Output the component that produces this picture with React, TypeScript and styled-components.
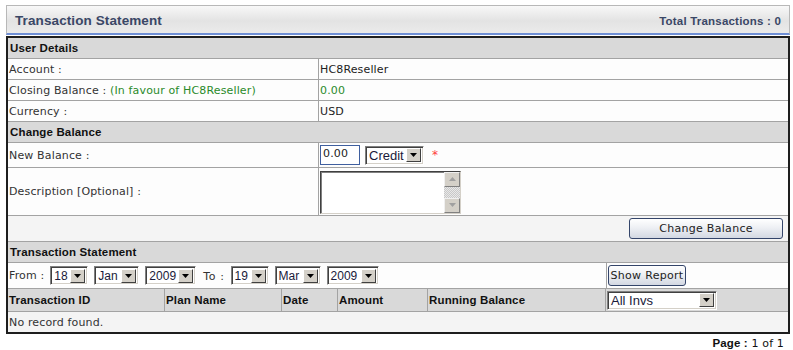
import React, { FC } from 'react';
import styled, { createGlobalStyle } from 'styled-components';

const GlobalStyle = createGlobalStyle`
  body {
    margin: 0;
    background: #ffffff;
    font-family: 'DejaVu Sans', Verdana, sans-serif;
    font-size: 11px;
    letter-spacing: 0.15px;
    color: #333333;
  }
`;

// @ fake classic controls
interface SelectProps {
  value: string;
  width: number;
  size?: number;
}

const FakeSelect: FC<SelectProps> = ({ value, width, size = 12 }) => (
  <SelectBox $w={width} $size={size}>
    <span>{value}</span>
    <ArrowButton>
      <svg width="7" height="4" viewBox="0 0 7 4">
        <path d="M0 0h7L3.5 4z" fill="#000" />
      </svg>
    </ArrowButton>
  </SelectBox>
);

const Button: FC<{ label: string; width: number }> = ({ label, width }) => <Btn $w={width}>{label}</Btn>;

const App: FC = () => {
  return (
    <>
      <GlobalStyle />
      <Page>
        <TitleBar>
          <Title>Transaction Statement</Title>
          <TotalText>Total Transactions : 0</TotalText>
        </TitleBar>

        <Panel>
          <SectionRow>User Details</SectionRow>
          <Row $h={20}>
            <Label>Account :</Label>
            <Value>HC8Reseller</Value>
          </Row>
          <Row $h={20}>
            <Label>
              Closing Balance : <Green>(In favour of HC8Reseller)</Green>
            </Label>
            <Value>
              <Green>0.00</Green>
            </Value>
          </Row>
          <Row $h={20}>
            <Label>Currency :</Label>
            <Value>USD</Value>
          </Row>

          <SectionRow>Change Balance</SectionRow>
          <Row $h={24}>
            <Label>New Balance :</Label>
            <Value>
              <AmountInput>0.00</AmountInput>
              <FakeSelect value="Credit" width={59} size={13} />
              <Required>*</Required>
            </Value>
          </Row>
          <Row $h={47}>
            <Label>Description [Optional] :</Label>
            <Value>
              <TextArea>
                <ScrollBar>
                  <ScrollBtn>
                    <svg width="7" height="4" viewBox="0 0 7 4">
                      <path d="M3.5 0L7 4H0z" fill="#a0a0a0" />
                    </svg>
                  </ScrollBtn>
                  <ScrollTrack />
                  <ScrollBtn>
                    <svg width="7" height="4" viewBox="0 0 7 4">
                      <path d="M0 0h7L3.5 4z" fill="#a0a0a0" />
                    </svg>
                  </ScrollBtn>
                </ScrollBar>
              </TextArea>
            </Value>
          </Row>
          <ActionRow>
            <Button label="Change Balance" width={154} />
          </ActionRow>

          <SectionRow>Transaction Statement</SectionRow>
          <FilterRow>
            <FilterCell>
              From :
              <FakeSelect value="18" width={38} />
              <FakeSelect value="Jan" width={45} />
              <FakeSelect value="2009" width={51} />
              <ToLabel>To :</ToLabel>
              <FakeSelect value="19" width={38} />
              <FakeSelect value="Mar" width={46} />
              <FakeSelect value="2009" width={52} />
            </FilterCell>
            <ReportCell>
              <Button label="Show Report" width={78} />
            </ReportCell>
          </FilterRow>
          <HeadGrid>
            <HeadCell>Transaction ID</HeadCell>
            <HeadCell>Plan Name</HeadCell>
            <HeadCell>Date</HeadCell>
            <HeadCell>Amount</HeadCell>
            <HeadCell>Running Balance</HeadCell>
            <HeadCell $last>
              <FakeSelect value="All Invs" width={110} size={13} />
            </HeadCell>
          </HeadGrid>
          <EmptyRow>No record found.</EmptyRow>
        </Panel>

        <Pager>
          <b>Page :</b> 1 of 1
        </Pager>
      </Page>
    </>
  );
};

// @ styles

const Page = styled.div`
  width: 784px;
  padding: 5px 0 0 6px;
`;

const TitleBar = styled.div`
  height: 27px;
  box-sizing: content-box;
  display: flex;
  align-items: center;
  justify-content: space-between;
  padding: 0 8px 0 8px;
  border: 1px solid #b8b8b8;
  border-bottom: 2px solid #6f8fd6;
  background: linear-gradient(#f8f8f8, #e3e3e3 55%, #ebebeb);
  margin-bottom: 1px;
`;

const Title = styled.span`
  font-family: 'Liberation Sans', Arial, sans-serif;
  font-weight: 700;
  font-size: 13.5px;
  letter-spacing: 0.1px;
  color: #3a4766;
  padding-top: 2px;
`;

const TotalText = styled.span`
  font-family: 'Liberation Sans', Arial, sans-serif;
  font-weight: 700;
  font-size: 11.5px;
  letter-spacing: 0.2px;
  color: #3a4766;
  padding-top: 2px;
`;

const Panel = styled.div`
  border: 2px solid #1e1e1e;
  background: #fdfdfd;
`;

const SectionRow = styled.div`
  height: 20px;
  display: flex;
  align-items: center;
  padding-left: 2px;
  background: #d9d9d9;
  border-bottom: 1px solid #a3a3a3;
  font-family: 'Liberation Sans', Arial, sans-serif;
  font-weight: 700;
  font-size: 11.5px;
  color: #111;
`;

const Row = styled.div<{ $h: number }>`
  height: ${(p) => p.$h}px;
  display: flex;
  border-bottom: 1px solid #a3a3a3;
  background: #fdfdfd;
`;

const Label = styled.div`
  width: 309px;
  flex-shrink: 0;
  padding-left: 1px;
  display: flex;
  align-items: center;
  white-space: pre;
  border-right: 1px solid #a3a3a3;
`;

const Value = styled.div`
  flex: 1;
  display: flex;
  align-items: center;
  padding-left: 1px;
  color: #222;
`;

const Green = styled.span`
  color: #2a8a2a;
`;

const AmountInput = styled.div`
  width: 40px;
  height: 20px;
  box-sizing: border-box;
  border: 1px solid #3f5f9f;
  background: #fff;
  padding: 1px 2px;
  font-size: 11px;
  color: #222;
  margin-right: 5px;
  align-self: flex-start;
  margin-top: 2px;
`;

const Required = styled.span`
  color: #ff4040;
  font-size: 12px;
  margin-left: 2px;
`;

const SelectBox = styled.div<{ $w: number; $size: number }>`
  width: ${(p) => p.$w}px;
  height: 19px;
  box-sizing: border-box;
  display: inline-flex;
  align-items: center;
  justify-content: space-between;
  background: #fff;
  border: 1px solid;
  border-color: #808080 #ffffff #ffffff #808080;
  box-shadow: inset 1px 1px 0 #404040, inset -1px -1px 0 #d4d0c8;
  padding: 0 2px 0 3px;
  margin-right: 6px;
  font-family: 'Liberation Sans', Arial, sans-serif;
  font-weight: 400;
  letter-spacing: 0;
  font-size: ${(p) => p.$size}px;
  color: #1a1a3a;
  vertical-align: middle;
`;

const ArrowButton = styled.span`
  width: 15px;
  height: 14px;
  box-sizing: border-box;
  display: flex;
  align-items: center;
  justify-content: center;
  background: #d4d0c8;
  border: 1px solid;
  border-color: #ffffff #404040 #404040 #ffffff;
`;

const TextArea = styled.div`
  width: 141px;
  height: 43px;
  box-sizing: border-box;
  display: flex;
  justify-content: flex-end;
  background: #fff;
  border: 1px solid;
  border-color: #404040 #d4d0c8 #d4d0c8 #404040;
  box-shadow: inset 1px 1px 0 #808080;
  margin-top: 1px;
`;

const ScrollBar = styled.div`
  width: 16px;
  display: flex;
  flex-direction: column;
`;

const ScrollBtn = styled.div`
  height: 15px;
  box-sizing: border-box;
  display: flex;
  align-items: center;
  justify-content: center;
  background: #d4d0c8;
  border: 1px solid;
  border-color: #f0f0f0 #808080 #808080 #f0f0f0;
`;

const ScrollTrack = styled.div`
  flex: 1;
  background: repeating-conic-gradient(#e8e8e8 0 25%, #c8c8c8 0 50%) 0 0 / 2px 2px;
`;

const ActionRow = styled.div`
  height: 25px;
  display: flex;
  align-items: center;
  justify-content: flex-end;
  padding-right: 5px;
  background: #f4f4f4;
  border-bottom: 1px solid #a3a3a3;
`;

const Btn = styled.div<{ $w: number }>`
  width: ${(p) => p.$w}px;
  height: 21px;
  box-sizing: border-box;
  display: flex;
  align-items: center;
  justify-content: center;
  border: 1px solid #34456a;
  border-radius: 3px;
  background: linear-gradient(#ffffff, #eef0f4 45%, #d3d8e2);
  color: #222;
  font-size: 11px;
  letter-spacing: 0.3px;
`;

const FilterRow = styled.div`
  height: 25px;
  display: flex;
  border-bottom: 1px solid #a3a3a3;
  background: #fdfdfd;
`;

const FilterCell = styled.div`
  width: 597px;
  flex-shrink: 0;
  display: flex;
  align-items: center;
  padding-left: 1px;
  border-right: 1px solid #a3a3a3;
  & > div:first-of-type {
    margin-left: 6px;
  }
`;

const ToLabel = styled.span`
  margin: 2px 6px 0 1px;
  letter-spacing: 0.6px;
`;

const ReportCell = styled.div`
  flex: 1;
  display: flex;
  align-items: center;
  padding-left: 1px;
`;

const HeadGrid = styled.div`
  height: 22px;
  display: grid;
  grid-template-columns: 157px 117px 56px 90px 178px 1fr;
  background: #d9d9d9;
  border-bottom: 1px solid #a3a3a3;
`;

const HeadCell = styled.div<{ $last?: boolean }>`
  display: flex;
  align-items: center;
  padding-left: 1px;
  border-right: ${(p) => (p.$last ? 'none' : '1px solid #a3a3a3')};
  font-family: 'Liberation Sans', Arial, sans-serif;
  font-weight: 700;
  font-size: 11.5px;
  color: #111;
`;

const EmptyRow = styled.div`
  height: 20px;
  display: flex;
  align-items: center;
  padding-left: 1px;
  background: #f4f4f4;
`;

const Pager = styled.div`
  text-align: right;
  padding: 3px 6px 0 0;
  font-size: 11px;
  color: #111;
  & b {
    font-family: 'Liberation Sans', Arial, sans-serif;
    font-size: 11.5px;
  }
`;

export default App;
